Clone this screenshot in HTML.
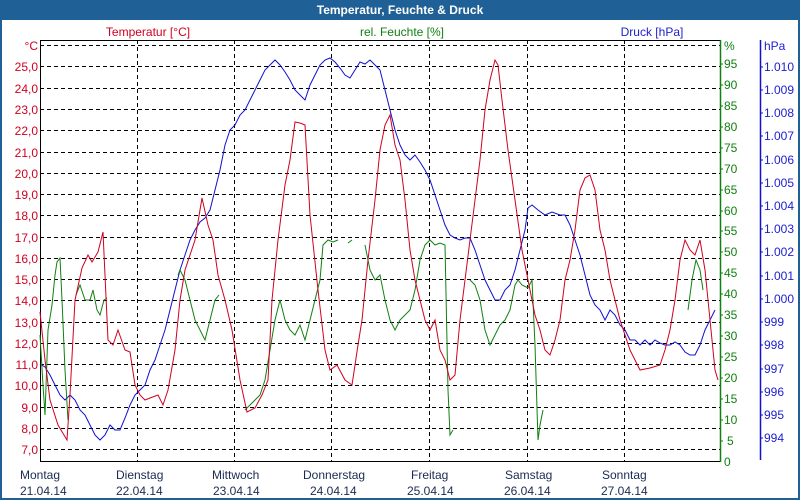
<!DOCTYPE html>
<html><head><meta charset="utf-8"><style>
html,body{margin:0;padding:0;width:800px;height:500px;overflow:hidden;background:#fff;font-family:"Liberation Sans",sans-serif}
</style></head><body>
<svg width="800" height="500" xmlns="http://www.w3.org/2000/svg" font-family="Liberation Sans, sans-serif" font-size="12">
<rect x="0" y="0" width="800" height="500" fill="#1f6096"/>
<rect x="2" y="20" width="796" height="478" fill="#fff"/>
<text x="400" y="14" fill="#fff" font-weight="bold" text-anchor="middle" font-size="12">Temperatur, Feuchte &amp; Druck</text>
<text x="148" y="36" fill="#d00020" text-anchor="middle">Temperatur [°C]</text>
<text x="402" y="36" fill="#108010" text-anchor="middle">rel. Feuchte [%]</text>
<text x="652" y="36" fill="#2020d0" text-anchor="middle">Druck [hPa]</text>
<g stroke="#000" stroke-dasharray="4,3" stroke-width="1">
<line x1="40" y1="45.5" x2="720" y2="45.5"/><line x1="40" y1="66.5" x2="720" y2="66.5"/><line x1="40" y1="88.5" x2="720" y2="88.5"/><line x1="40" y1="109.5" x2="720" y2="109.5"/><line x1="40" y1="130.5" x2="720" y2="130.5"/><line x1="40" y1="152.5" x2="720" y2="152.5"/><line x1="40" y1="173.5" x2="720" y2="173.5"/><line x1="40" y1="194.5" x2="720" y2="194.5"/><line x1="40" y1="215.5" x2="720" y2="215.5"/><line x1="40" y1="237.5" x2="720" y2="237.5"/><line x1="40" y1="258.5" x2="720" y2="258.5"/><line x1="40" y1="279.5" x2="720" y2="279.5"/><line x1="40" y1="300.5" x2="720" y2="300.5"/><line x1="40" y1="322.5" x2="720" y2="322.5"/><line x1="40" y1="343.5" x2="720" y2="343.5"/><line x1="40" y1="364.5" x2="720" y2="364.5"/><line x1="40" y1="385.5" x2="720" y2="385.5"/><line x1="40" y1="407.5" x2="720" y2="407.5"/><line x1="40" y1="428.5" x2="720" y2="428.5"/><line x1="40" y1="449.5" x2="720" y2="449.5"/>
<line x1="137.5" y1="40" x2="137.5" y2="461"/><line x1="234.5" y1="40" x2="234.5" y2="461"/><line x1="331.5" y1="40" x2="331.5" y2="461"/><line x1="429.5" y1="40" x2="429.5" y2="461"/><line x1="527.5" y1="40" x2="527.5" y2="461"/><line x1="624.5" y1="40" x2="624.5" y2="461"/>
</g>
<line x1="40.5" y1="40" x2="40.5" y2="462" stroke="#000"/>
<line x1="40" y1="40.5" x2="720" y2="40.5" stroke="#000"/>
<line x1="40" y1="461.5" x2="720" y2="461.5" stroke="#000"/>
<line x1="720.5" y1="40" x2="720.5" y2="462" stroke="#108010" stroke-width="1.5"/>
<line x1="760.5" y1="40" x2="760.5" y2="460" stroke="#1010d0" stroke-width="1.5"/>
<g fill="#d00020" text-anchor="end">
<text x="38" y="50">°C</text><text x="38" y="71">25,0</text><text x="38" y="93">24,0</text><text x="38" y="114">23,0</text><text x="38" y="135">22,0</text><text x="38" y="157">21,0</text><text x="38" y="178">20,0</text><text x="38" y="199">19,0</text><text x="38" y="220">18,0</text><text x="38" y="242">17,0</text><text x="38" y="263">16,0</text><text x="38" y="284">15,0</text><text x="38" y="305">14,0</text><text x="38" y="327">13,0</text><text x="38" y="348">12,0</text><text x="38" y="369">11,0</text><text x="38" y="390">10,0</text><text x="38" y="412">9,0</text><text x="38" y="433">8,0</text><text x="38" y="454">7,0</text>
</g>
<g fill="#108010">
<text x="724" y="50">%</text>
<text x="724" y="68">95</text><text x="724" y="89">90</text><text x="724" y="110">85</text><text x="724" y="131">80</text><text x="724" y="152">75</text><text x="724" y="173">70</text><text x="724" y="194">65</text><text x="724" y="215">60</text><text x="724" y="235">55</text><text x="724" y="256">50</text><text x="724" y="277">45</text><text x="724" y="298">40</text><text x="724" y="319">35</text><text x="724" y="340">30</text><text x="724" y="361">25</text><text x="724" y="382">20</text><text x="724" y="403">15</text><text x="724" y="424">10</text><text x="727" y="445">5</text><text x="724" y="466">0</text>
</g>
<g stroke="#108010"><line x1="720" y1="64" x2="723" y2="64"/><line x1="720" y1="85" x2="723" y2="85"/><line x1="720" y1="106" x2="723" y2="106"/><line x1="720" y1="127" x2="723" y2="127"/><line x1="720" y1="148" x2="723" y2="148"/><line x1="720" y1="169" x2="723" y2="169"/><line x1="720" y1="190" x2="723" y2="190"/><line x1="720" y1="211" x2="723" y2="211"/><line x1="720" y1="231" x2="723" y2="231"/><line x1="720" y1="252" x2="723" y2="252"/><line x1="720" y1="273" x2="723" y2="273"/><line x1="720" y1="294" x2="723" y2="294"/><line x1="720" y1="315" x2="723" y2="315"/><line x1="720" y1="336" x2="723" y2="336"/><line x1="720" y1="357" x2="723" y2="357"/><line x1="720" y1="378" x2="723" y2="378"/><line x1="720" y1="399" x2="723" y2="399"/><line x1="720" y1="420" x2="723" y2="420"/><line x1="720" y1="441" x2="723" y2="441"/></g>
<g fill="#2020d0">
<text x="764" y="50">hPa</text>
<text x="764" y="71">1.010</text><text x="764" y="94">1.009</text><text x="764" y="117">1.008</text><text x="764" y="140">1.007</text><text x="764" y="164">1.006</text><text x="764" y="187">1.005</text><text x="764" y="210">1.004</text><text x="764" y="233">1.003</text><text x="764" y="256">1.002</text><text x="764" y="280">1.001</text><text x="764" y="303">1.000</text><text x="764" y="326">999</text><text x="764" y="349">998</text><text x="764" y="373">997</text><text x="764" y="396">996</text><text x="764" y="419">995</text><text x="764" y="442">994</text>
</g>
<g stroke="#1010d0"><line x1="760" y1="67" x2="763" y2="67"/><line x1="760" y1="90" x2="763" y2="90"/><line x1="760" y1="113" x2="763" y2="113"/><line x1="760" y1="136" x2="763" y2="136"/><line x1="760" y1="160" x2="763" y2="160"/><line x1="760" y1="183" x2="763" y2="183"/><line x1="760" y1="206" x2="763" y2="206"/><line x1="760" y1="229" x2="763" y2="229"/><line x1="760" y1="252" x2="763" y2="252"/><line x1="760" y1="276" x2="763" y2="276"/><line x1="760" y1="299" x2="763" y2="299"/><line x1="760" y1="322" x2="763" y2="322"/><line x1="760" y1="345" x2="763" y2="345"/><line x1="760" y1="369" x2="763" y2="369"/><line x1="760" y1="392" x2="763" y2="392"/><line x1="760" y1="415" x2="763" y2="415"/><line x1="760" y1="438" x2="763" y2="438"/></g>
<g fill="#1a2a50">
<text x="20" y="479">Montag</text><text x="20" y="495">21.04.14</text>
<text x="116" y="479">Dienstag</text><text x="116" y="495">22.04.14</text>
<text x="212" y="479">Mittwoch</text><text x="213" y="495">23.04.14</text>
<text x="303" y="479">Donnerstag</text><text x="310" y="495">24.04.14</text>
<text x="411" y="479">Freitag</text><text x="407" y="495">25.04.14</text>
<text x="505" y="479">Samstag</text><text x="504" y="495">26.04.14</text>
<text x="602" y="479">Sonntag</text><text x="601" y="495">27.04.14</text>
</g>
<g fill="none" stroke-width="1">
<polyline stroke="#1010d0" points="40,364 45,367 50,375 55,385 60,395 65,400 70,395 75,400 80,410 85,415 90,425 95,435 100,440 105,435 110,425 115,430 120,430 125,418 130,405 135,395 140,390 145,385 150,370 155,360 160,345 165,330 170,310 175,290 180,270 185,255 190,240 195,230 200,222 205,218 210,210 215,190 220,170 225,145 230,130 235,125 240,115 245,110 250,100 255,90 260,80 265,70 270,65 275,60 280,65 285,72 290,80 295,90 300,95 305,100 310,85 315,75 320,65 325,60 330,58 335,62 340,68 345,75 350,78 355,70 360,62 365,64 370,60 375,65 380,70 385,90 390,110 395,130 400,145 405,155 410,160 415,155 420,162 425,170 430,180 435,195 440,210 445,225 450,235 455,238 460,240 465,238 470,238 475,250 480,265 485,280 490,290 495,300 500,300 505,290 510,285 515,270 520,250 525,230 528,208 532,205 538,210 545,215 552,212 560,215 565,215 570,225 575,240 580,255 585,275 590,295 595,305 600,310 605,320 610,310 615,315 620,325 625,330 630,340 635,340 640,345 645,340 650,345 655,340 660,343 665,345 670,345 675,342 680,345 685,352 690,355 695,355 700,345 705,330 710,320 715,310"/>
<polyline stroke="#108010" points="40,335 43,385 45,415 48,330 52,305 55,275 57,262 60,258 62,300 65,370 68,420"/>
<polyline stroke="#108010" points="76,295 80,285 85,300 90,300 93,290 97,310 100,315 104,300 107,298"/>
<polyline stroke="#108010" points="178,275 180,270 185,280 190,300 195,320 200,330 205,340 210,320 215,300 219,295"/>
<polyline stroke="#108010" points="245,410 250,405 255,400 260,395 265,380 270,350 275,320 280,300 285,320 290,330 295,335 300,325 305,340 310,320 315,300 320,280 323,245 328,240 333,242 338,240"/>
<polyline stroke="#108010" points="348,243 352,240"/>
<polyline stroke="#108010" points="365,245 370,270 375,280 380,275 385,300 390,320 395,330 400,320 405,315 410,310 415,290 420,260 425,245 430,240 435,245 440,243 445,245 448,390 450,435 453,430"/>
<polyline stroke="#108010" points="470,280 475,285 480,300 485,330 490,345 495,335 500,325 505,320 510,310 515,285 518,280 522,285 528,288 532,280 535,345 538,440 540,425 543,410"/>
<polyline stroke="#108010" points="688,310 692,280 696,260 700,270 703,290"/>
<polyline stroke="#d00020" points="40,312 45,360 50,400 58,425 67,440 70,395 75,300 82,268 88,255 92,262 98,252 103,232 108,340 113,345 118,330 125,350 130,352 135,385 140,395 145,400 150,398 158,395 163,405 168,390 175,350 180,300 185,270 195,240 202,198 208,225 213,240 218,275 225,300 232,330 240,380 247,412 255,408 262,395 268,380 272,300 278,240 285,185 290,160 295,122 300,123 305,125 310,215 318,290 325,350 330,370 337,365 345,380 352,385 358,345 362,320 368,260 375,200 380,150 385,125 390,115 395,145 400,160 405,200 410,250 415,280 420,300 425,320 430,330 435,320 440,350 445,360 450,380 455,375 460,320 465,280 470,240 475,200 480,160 485,110 490,80 495,60 498,65 502,100 508,150 515,200 522,250 530,290 535,315 540,330 545,350 550,355 555,340 560,320 565,280 570,260 575,230 580,190 585,178 590,175 595,190 600,230 605,250 610,280 615,300 620,320 625,335 630,350 640,370 650,368 660,365 665,350 670,330 675,300 680,260 685,240 690,250 695,255 700,240 705,270 710,320 715,370 718,380"/>
</g>
</svg>
</body></html>
